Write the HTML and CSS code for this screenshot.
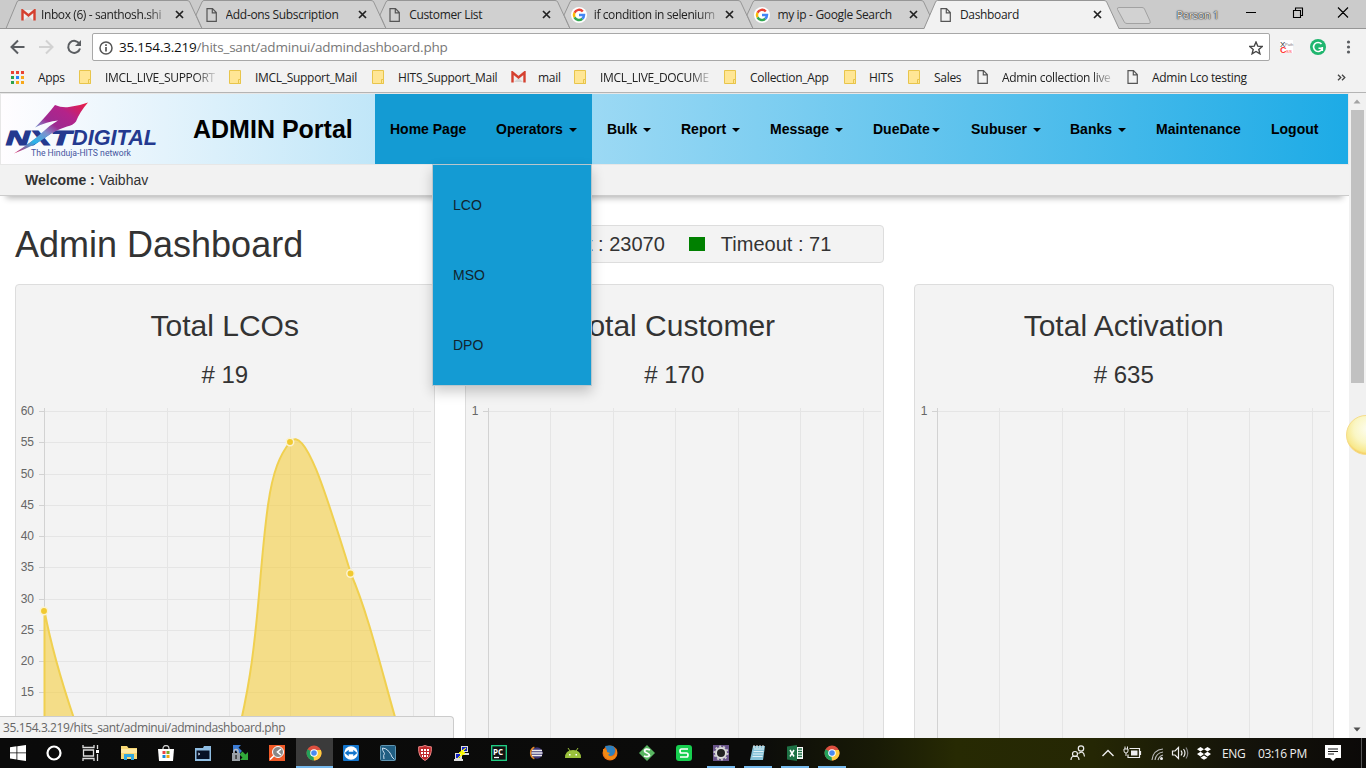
FILE: index.html
```html
<!DOCTYPE html>
<html lang="en">
<head>
<meta charset="utf-8">
<title>Dashboard</title>
<link rel="stylesheet" href="styles.css">
</head>
<body>
<svg class="defs" width="0" height="0" aria-hidden="true">
  <linearGradient id="star" x1="0" y1="1" x2="1" y2="0"><stop offset="0" stop-color="#e2195c"/><stop offset=".25" stop-color="#27b5ea"/><stop offset=".42" stop-color="#8190cc"/><stop offset=".55" stop-color="#9d2a91"/><stop offset=".75" stop-color="#b3238a"/><stop offset="1" stop-color="#ee1c3f"/></linearGradient>
  <radialGradient id="ball" cx=".55" cy=".35" r=".65"><stop offset="0" stop-color="#fdfdf0"/><stop offset=".55" stop-color="#faf6c4"/><stop offset=".9" stop-color="#f8e88c"/><stop offset="1" stop-color="#f6c95c"/></radialGradient>
  <symbol id="doc" viewBox="0 0 11 14"><path d="M1 .7h5.500l3.800 3.800v8.800H1zM6.300 1v3.800h4" fill="none" stroke="#555" stroke-width="1.200"/></symbol>
  <symbol id="folder" viewBox="0 0 12 14"><path d="M.5.5h11v13H.5z" fill="#ffe695" stroke="#e8c54b"/><path d="M9.500 9.500h2v4h-2z" fill="#ffe695" stroke="#e8c54b"/></symbol>
  <symbol id="gmail" viewBox="0 0 15 12"><path d="M1 1h13v10H1z" fill="#eee"/><path d="M3 11l4.500-4 4.500 4z" fill="#d5d5d5"/><path d="M1.500 11.500V1.500l6 5 6-5v10" fill="none" stroke="#d5402f" stroke-width="2.400"/></symbol>
  <symbol id="google" viewBox="0 0 16 16"><circle cx="8" cy="8" r="8" fill="#fff"/><g fill="none" stroke-width="2.500"><path d="M11.800 4.500A5 5 0 0 0 3.500 5.800" stroke="#ea4335"/><path d="M3.500 5.800a5 5 0 0 0 0 4.500" stroke="#fbbc05"/><path d="M3.500 10.300a5 5 0 0 0 7.800 1.400" stroke="#34a853"/><path d="M11.300 11.700A5 5 0 0 0 13 8H8" stroke="#4285f4"/></g></symbol>
  <symbol id="close" viewBox="0 0 9 9"><path d="M1 1l7 7M8 1L1 8" stroke="#222" stroke-width="1.700"/></symbol>
  <symbol id="chrome" viewBox="0 0 16 16"><circle cx="8" cy="8" r="7.500" fill="#dd4f3f"/><path d="M8 8l-6.500-3.700A7.500 7.500 0 0 0 8 15.500z" fill="#23a05a"/><path d="M8 8h-1l1 7.500a7.500 7.500 0 0 0 6.900-10.500H8z" fill="#fecd3f"/><circle cx="8" cy="8" r="3.800" fill="#fff"/><circle cx="8" cy="8" r="2.800" fill="#4a8af0"/></symbol>
</svg>

<header class="browser">
  <div class="tabstrip">
    <svg class="tabshapes" width="1366" height="29" viewBox="0 0 1366 29">
      <g fill="#d0d0d0" stroke="#969696">
        <path d="M6 28.500L17 2q.5-1.500 2-1.500H187q2 0 2.700 1.500L202 28.500z"/>
        <path d="M202 28.500L196 15 202 2q.7-1.500 2-1.500H371q2 0 2.700 1.500L386 28.500z"/>
        <path d="M386 28.500L380 15 386 2q.7-1.500 2-1.500H555q2 0 2.700 1.500L570 28.500z"/>
        <path d="M570 28.500L564 15 570 2q.7-1.500 2-1.500H738q2 0 2.700 1.500L753 28.500z"/>
        <path d="M753 28.500L747 15 753 2q.7-1.500 2-1.500H921q2 0 2.700 1.500L936 28.500z"/>
      </g>
      <path d="M0 28.500H1366" stroke="#969696"/>
      <path d="M924 29L935.500 2q.7-1.500 2-1.500H1104q2 0 2.700 1.500L1119 29z" fill="#f2f2f2"/>
      <path d="M924 28.500L935.500 2q.7-1.500 2-1.500H1104q2 0 2.700 1.500L1119 28.500" fill="none" stroke="#969696"/>
      <path d="M1119 7.500H1142q2 0 2.500 1.500L1150 21q1 2.500-1 2.500H1127q-2 0-2.700-1.500L1117.500 9.500q-.8-2 1.500-2z" fill="#d2d2d2" stroke="#a2a2a2"/>
    </svg>
    <div class="tab"><svg class="i15"><use href="#gmail"/></svg><span class="tlabel fade-g">Inbox (6) - santhosh.shi</span><svg class="x"><use href="#close"/></svg></div>
    <div class="tab"><svg class="idoc"><use href="#doc"/></svg><span class="tlabel">Add-ons Subscription</span><svg class="x"><use href="#close"/></svg></div>
    <div class="tab"><svg class="idoc"><use href="#doc"/></svg><span class="tlabel">Customer List</span><svg class="x"><use href="#close"/></svg></div>
    <div class="tab"><svg class="i16"><use href="#google"/></svg><span class="tlabel fade-g">if condition in selenium</span><svg class="x"><use href="#close"/></svg></div>
    <div class="tab"><svg class="i16"><use href="#google"/></svg><span class="tlabel">my ip - Google Search</span><svg class="x"><use href="#close"/></svg></div>
    <div class="tab"><svg class="idoc"><use href="#doc"/></svg><span class="tlabel">Dashboard</span><svg class="x"><use href="#close"/></svg></div>
    <span class="person">Person 1</span>
    <svg class="winctl" width="110" height="20" viewBox="0 0 110 20" fill="none" stroke="#000" stroke-width="1.100"><path d="M1 9.500h10M48.500 7.500h7v7h-7zM50.500 7.500v-2.500h7v7.500h-2M93 4.500l10 10M103 4.500l-10 10"/></svg>
  </div>
  <div class="toolbar">
    <svg class="navbtns" width="92" height="33" viewBox="0 0 92 33" fill="none" stroke="#5a5d61" stroke-width="2"><path d="M24.500 18H12.500M18 11.500L11.500 18l6.500 6.500"/><path d="M39 18h12.500M46 11.500l6.500 6.500-6.500 6.500" stroke="#d2d2d2"/><path d="M79.500 15A6 6 0 1 0 80 19.500"/><path d="M81 11v6h-6z" fill="#5a5d61" stroke="none"/></svg>
    <div class="omnibox">
      <svg width="14" height="14" viewBox="0 0 14 14"><circle cx="7" cy="7" r="6" fill="none" stroke="#555" stroke-width="1.500"/><path d="M7 6v4.500M7 3.300v1.600" stroke="#555" stroke-width="1.700"/></svg>
      <span class="url"><b>35.154.3.219</b>/hits_sant/adminui/admindashboard.php</span>
      <svg class="star" width="14" height="14" viewBox="0 0 14 14"><path d="M7 1l1.800 4.200 4.400.3-3.400 2.900 1.100 4.400L7 10.500l-3.900 2.300 1.100-4.400L.8 5.500l4.400-.3z" fill="none" stroke="#444" stroke-width="1.400"/></svg>
    </div>
    <svg class="exts" width="96" height="33" viewBox="0 0 96 33"><rect x="10" y="11" width="13" height="13" fill="#fff"/><g font-family="Liberation Sans"><text x="10" y="17.500" font-size="8" fill="#333">X</text><text x="15" y="17" font-size="4" fill="#777">Path</text><text x="10" y="24" font-size="9" font-weight="bold" fill="#f33">C</text><text x="16" y="24" font-size="6" fill="#f66">ss</text></g><circle cx="48" cy="18" r="8" fill="#20b66f"/><path d="M51.500 15A4.500 4.500 0 1 0 52.300 19.500M48.500 19.200h4M52.300 18v4" fill="none" stroke="#fff" stroke-width="1.600"/><g fill="#5a5d61"><circle cx="78.500" cy="13" r="1.600"/><circle cx="78.500" cy="18" r="1.600"/><circle cx="78.500" cy="23" r="1.600"/></g></svg>
  </div>
  <div class="bookmarks">
    <svg class="apps" width="13" height="13" viewBox="0 0 13 13"><path d="M0 0h3v3H0zM5 0h3v3H5zM10 0h3v3h-3z" fill="#ea4335"/><path d="M0 5h3v3H0zM0 10h3v3H0z" fill="#2ba24c"/><path d="M5 5h3v3H5z" fill="#2684fc"/><path d="M10 5h3v3h-3zM5 10h3v3H5zM10 10h3v3h-3z" fill="#f7a81b"/></svg>
    <span class="bm b-apps">Apps</span>
    <svg class="fd"><use href="#folder"/></svg><span class="bm b1 fade">IMCL_LIVE_SUPPORT</span>
    <svg class="fd"><use href="#folder"/></svg><span class="bm b2">IMCL_Support_Mail</span>
    <svg class="fd"><use href="#folder"/></svg><span class="bm b3">HITS_Support_Mail</span>
    <svg class="gm"><use href="#gmail"/></svg><span class="bm b4">mail</span>
    <svg class="fd"><use href="#folder"/></svg><span class="bm b5 fade">IMCL_LIVE_DOCUME</span>
    <svg class="fd"><use href="#folder"/></svg><span class="bm b6">Collection_App</span>
    <svg class="fd"><use href="#folder"/></svg><span class="bm b7">HITS</span>
    <svg class="fd"><use href="#folder"/></svg><span class="bm b8">Sales</span>
    <svg class="dc"><use href="#doc"/></svg><span class="bm b9 fade">Admin collection live</span>
    <svg class="dc"><use href="#doc"/></svg><span class="bm b10">Admin Lco testing</span>
    <svg class="more" width="9" height="7" viewBox="0 0 9 7" fill="none" stroke="#444" stroke-width="1.300"><path d="M1 .7l2.800 2.800L1 6.300M5 .7l2.800 2.800L5 6.300"/></svg>
  </div>
</header>

<div class="viewport">
  <main class="page">
    <nav class="navbar">
      <svg class="logo" width="165" height="70" viewBox="0 94 165 70">
        <g fill="#24398f" font-family="Liberation Sans" font-weight="bold" font-style="italic"><text x="6" y="144.500" font-size="20.500" textLength="65" lengthAdjust="spacingAndGlyphs" stroke="#24398f" stroke-width="1.200">NXT</text><text x="72" y="145" font-size="22" textLength="85" lengthAdjust="spacingAndGlyphs">DIGITAL</text></g>
        <path d="M55 105q7 3 14 2 10-1 19-4.500-8 9-12 19-3 4-9 5-12 4-20 10-12 9-33 17 17-11 27-20 8-8 17-13-11 1-23 7 12-12 20-22.500z" fill="url(#star)"/>
        <text x="31" y="155.500" font-family="Roboto" font-size="8.500" fill="#4656a0" textLength="100" lengthAdjust="spacingAndGlyphs">The Hinduja-HITS network</text>
      </svg>
      <div class="brand">ADMIN Portal</div>
      <a class="item on n1">Home Page</a>
      <a class="item on n2">Operators <i class="caret"></i></a>
      <a class="item n3">Bulk <i class="caret"></i></a>
      <a class="item n4">Report <i class="caret"></i></a>
      <a class="item n5">Message <i class="caret"></i></a>
      <a class="item n6">DueDate<i class="caret"></i></a>
      <a class="item n7">Subuser <i class="caret"></i></a>
      <a class="item n8">Banks <i class="caret"></i></a>
      <a class="item n9">Maintenance</a>
      <a class="item n10">Logout</a>
      <div class="dropdown"><a>LCO</a><a>MSO</a><a>DPO</a></div>
    </nav>
    <div class="welcome"><b>Welcome :</b> Vaibhav</div>
    <div class="titlerow">
      <h1>Admin Dashboard</h1>
      <div class="stats"><span>t : 23070</span><i class="green"></i><span>Timeout : 71</span></div>
    </div>
    <div class="cards">
      <section class="card">
        <h2>Total LCOs</h2><h3># 19</h3>
        <svg class="chart" width="418" height="400" viewBox="16 400 418 400">
          <path class="grid" d="M39 411.500H431M39 442.500H431M39 474.500H431M39 505.500H431M39 536.500H431M39 567.500H431M39 599.500H431M39 630.500H431M39 661.500H431M39 692.500H431M106.500 408V800M167.500 408V800M229.500 408V800M290.500 408V800M351.500 408V800M413.500 408V800"/>
          <path class="axis" d="M44.500 408V800M39 411.500H44M39 442.500H44M39 474.500H44M39 505.500H44M39 536.500H44M39 567.500H44M39 599.500H44M39 630.500H44M39 661.500H44M39 692.500H44"/>
          <path class="area" d="M44.500 611C51 645 61 680 73.500 717L98 790H44.500zM223 790C262 660 255 600 268 505C273 470 280 455 290 442C305 425 325 490 351 574C368 613 382 672 395 717L415 790z"/>
          <path class="line" d="M98 790L73.500 717C61 680 51 645 44.500 611V790M223 790C262 660 255 600 268 505C273 470 280 455 290 442C305 425 325 490 351 574C368 613 382 672 395 717L415 790"/>
          <g class="dots"><circle cx="44" cy="611" r="3.700"/><circle cx="290" cy="442" r="3.700"/><circle cx="350.500" cy="573.500" r="3.700"/></g>
          <g class="lab"><text x="34" y="415">60</text><text x="34" y="446">55</text><text x="34" y="478">50</text><text x="34" y="509">45</text><text x="34" y="540">40</text><text x="34" y="571">35</text><text x="34" y="603">30</text><text x="34" y="634">25</text><text x="34" y="665">20</text><text x="34" y="696">15</text></g>
        </svg>
      </section>
      <section class="card">
        <h2>Total Customer</h2><h3># 170</h3>
        <svg class="chart" width="418" height="400" viewBox="466 400 418 400">
          <path class="grid" d="M483 411.500H881M550.500 408V800M613.500 408V800M675.500 408V800M738.500 408V800M800.500 408V800M863.500 408V800"/><path class="axis" d="M488.500 408V800M483 411.500H488"/><g class="lab"><text x="478.500" y="415">1</text></g>
        </svg>
      </section>
      <section class="card">
        <h2>Total Activation</h2><h3># 635</h3>
        <svg class="chart" width="418" height="400" viewBox="915 400 418 400">
          <path class="grid" d="M932 411.500H1330M999.500 408V800M1062.500 408V800M1124.500 408V800M1187.500 408V800M1249.500 408V800M1312.500 408V800"/><path class="axis" d="M937.500 408V800M932 411.500H937"/><g class="lab"><text x="927.500" y="415">1</text></g>
        </svg>
      </section>
    </div>
  </main>
  <aside class="scroll">
    <svg width="17" height="17" viewBox="0 0 17 17"><path d="M4.500 10.500h7l-3.500-4z" fill="#a3a3a3"/></svg>
    <div class="thumb"></div>
    <svg class="down" width="17" height="17" viewBox="0 0 17 17"><path d="M4.500 6.500h7l-3.500 4z" fill="#505050"/></svg>
  </aside>
  <svg class="ball" width="20" height="42" viewBox="0 0 20 42"><circle cx="20" cy="21" r="19.500" fill="url(#ball)" stroke="#f5dc8a"/></svg>
  <div class="status">35.154.3.219/hits_sant/adminui/admindashboard.php</div>
</div>

<footer class="taskbar">
  <div class="t w36"><svg width="16" height="16" viewBox="0 0 16 16" fill="#fff"><path d="M0 2.200l6.500-.9v6.200H0zM7.300 1.200L16 0v7.500H7.300zM0 8.300h6.500v6.200L0 13.600zM7.300 8.300H16V16l-8.700-1.200z"/></svg></div>
  <div class="t w36"><svg width="16" height="16"><circle cx="8" cy="8" r="6.500" fill="none" stroke="#fff" stroke-width="2.200"/></svg></div>
  <div class="t w37"><svg width="18" height="16" viewBox="0 0 18 16" fill="none" stroke="#ddd" stroke-width="1.300"><path d="M1 0v2.500h11V0M1.500 5h10v6h-10zM1 16v-2.500h11V16M15.500 0v4M15.500 9v7"/><path d="M14 5h3v3h-3z" fill="#fff" stroke="none"/></svg></div>
  <div class="t"><svg width="16" height="16"><path d="M0 1h6l1.500 2H16v11H0z" fill="#f7d774"/><path d="M0 4h16v4H0z" fill="#ffe9a1"/><path d="M3 15V9h10v6h-3v-3H6v3z" fill="#31a8e0"/></svg></div>
  <div class="t"><svg width="16" height="16"><path d="M5 5V3.500a3 3 0 0 1 6 0V5" fill="none" stroke="#ccc" stroke-width="1.300"/><path d="M0 4h16l-1 12H1z" fill="#fff"/><path d="M4.500 6h3v3h-3z" fill="#e44"/><path d="M8.500 6h3v3h-3z" fill="#7ba82b"/><path d="M4.500 10h3v3h-3z" fill="#1889d8"/><path d="M8.500 10h3v3h-3z" fill="#f4a60d"/></svg></div>
  <div class="t"><svg width="16" height="15"><path d="M0 2h8l1-2h7v15H0z" fill="#8fbde2"/><path d="M1.500 4.500h13v8.500h-13z" fill="#071126"/><path d="M3 7l2 1-2 1" stroke="#bcd" fill="none"/></svg></div>
  <div class="t"><svg width="17" height="16"><path d="M1 0h8L6.500 2.500 10 6 7 9 3.500 5.500 1 8z" fill="#3b7bd4"/><path d="M16 15H8l2.500-2.500L7.500 9.500l3-3 3 3L16 7z" fill="#31a83b"/><path d="M0 8h8v8H0z" fill="#9aa0a6"/><path d="M2 8V6.500a2 2 0 0 1 4 0V8" fill="none" stroke="#bbb" stroke-width="1.500"/><path d="M3.300 10h1.500v4H3.300z" fill="#333"/></svg></div>
  <div class="t"><svg width="16" height="16"><path d="M0 0h16v16H0z" fill="#f05a28"/><circle cx="9" cy="7" r="5.500" fill="#888" stroke="#fff"/><path d="M12 4L8.500 7l3.500 3M1 14.500l4-4" fill="none" stroke="#fff" stroke-width="1.600"/></svg></div>
  <div class="t active"><svg width="16" height="16"><use href="#chrome"/></svg></div>
  <div class="t"><svg width="16" height="16"><rect width="16" height="16" rx="1" fill="#1376ce"/><circle cx="8" cy="8" r="6.800" fill="#fff"/><path d="M1.700 8l4-3.200v2h4.600v-2l4 3.200-4 3.200v-2H5.700v2z" fill="#1376ce"/></svg></div>
  <div class="t"><svg width="16" height="16"><rect x=".5" y=".5" width="15" height="15" rx="1" fill="#205e82" stroke="#5f95b2"/><path d="M4 14q-1-4 .5-5.500Q2 5 2.500 3 6 3 9 6.500q2.500 3.500 3 5.500l2.500 2.500" fill="none" stroke="#cde" stroke-width="1"/></svg></div>
  <div class="t"><svg width="14" height="16" viewBox="0 0 14 16"><path d="M7 .5q3 1.500 6.300 1.300 1 10-6.300 13.700Q-.3 11.800.7 1.800 4 2 7 .5z" fill="#bf2a2c" stroke="#e88"/><path d="M3 4h8v2H3zM3 7h8v2H3zM4 10h6v2H4z" fill="#fff"/><path d="M5.500 3v10M8.500 3v10" stroke="#bf2a2c"/></svg></div>
  <div class="t"><svg width="16" height="16"><path d="M7 1h7v6H7zM1 8h7v6H1zM9 8h6v2H9zM0 14h9v2H0z" fill="#ddd"/><path d="M8 2h5v4H8zM2 9h4v4H2z" fill="#1525c5"/><path d="M12 3L5 8l3 1-4 4 7-5-3-1z" fill="#ff0" stroke="#ff0"/></svg></div>
  <div class="t"><svg width="16" height="16"><rect x=".7" y=".7" width="14.600" height="14.600" fill="#111" stroke="#21d789" stroke-width="1.300"/><text x="2" y="9.500" font-family="Open Sans" font-size="8" font-weight="bold" fill="#fff">PC</text><path d="M3 12.500h5" stroke="#fff" stroke-width="1.300"/></svg></div>
  <div class="t"><svg width="16" height="14"><path d="M6.500 1.500a6 6 0 0 0 0 11" fill="none" stroke="#e98b26" stroke-width="2"/><circle cx="9" cy="7" r="5.700" fill="#3d3574"/><path d="M4 4.500h10M3.500 7h11M4 9.500h10" stroke="#eee" stroke-width="1.300"/></svg></div>
  <div class="t"><svg width="16" height="10"><path d="M0 10q0-8 8-8t8 8z" fill="#9ac03c"/><path d="M3 0l2 3M13 0l-2 3" stroke="#9ac03c"/><path d="M4 6h1.500v1.500H4zM10.500 6H12v1.500h-1.500z" fill="#fff"/></svg></div>
  <div class="t"><svg width="16" height="16"><circle cx="8" cy="8" r="7.500" fill="#e96a12"/><path d="M3 1q4-1 8 0 3 3 2 6-1 4-5 4-4-1-3-4 0-2-2-6z" fill="#2f80bd"/><path d="M1 4q4 0 4 3l3 1-2 2q3 3 7 0l2-7q1 9-5 12Q0 14 1 4z" fill="#f28a15"/></svg></div>
  <div class="t"><svg width="16" height="16"><path d="M8 0l8 8-8 8-8-8z" fill="#58b661"/><path d="M11 5Q6 3 5.500 6q0 1 2.500 2t2.500 2.500Q9 12.500 5 11" fill="none" stroke="#fff" stroke-width="1.800"/></svg></div>
  <div class="t"><svg width="16" height="16"><rect width="16" height="16" rx="3" fill="#17cf50"/><path d="M12 4H5.500q-1.500 0-1.500 2t1.500 2h5Q12 8 12 10t-1.500 2H4" fill="none" stroke="#fff" stroke-width="1.700"/></svg></div>
  <div class="t run"><svg width="16" height="16"><path d="M0 0h16v16H0z" fill="#68538a"/><circle cx="8" cy="8" r="5" fill="#222" stroke="#ddd" stroke-width="2"/><circle cx="8" cy="8" r="6.500" fill="none" stroke="#ccc" stroke-width="2" stroke-dasharray="2 2"/></svg></div>
  <div class="t run"><svg width="16" height="16"><path d="M3 1h12l-2 14H0z" fill="#86c2d8"/><path d="M4 4h10M3.500 6.500h10M3 9h10M2.500 11.500h10" stroke="#dff1f7"/><path d="M4 0v3M7 0v3M10 0v3M13 0v3" stroke="#eee"/></svg></div>
  <div class="t run"><svg width="16" height="16"><path d="M9 2h7v12H9z" fill="#fff"/><path d="M11 4h4M11 6.500h4M11 9h4M11 11.500h4" stroke="#1e7145" stroke-width="1.500"/><path d="M0 1.500L10 0v16L0 14.500z" fill="#1e7145"/><path d="M3 5l4 6.500M7 5l-4 6.500" stroke="#fff" stroke-width="1.500"/></svg></div>
  <div class="t run"><svg width="16" height="16"><use href="#chrome"/></svg></div>
  <div class="tray">
    <svg width="146" height="30" viewBox="1066 738 146 30" fill="none" stroke="#eee" stroke-width="1.200"><circle cx="1081" cy="748.500" r="2.700"/><circle cx="1075" cy="754" r="2.500"/><path d="M1071 760q0-4 4-4t4 4M1078.500 753.500q5-4 6 3"/><path d="M1102.500 756l5.500-5.500 5.500 5.500" stroke-width="1.400"/><path d="M1131 750.500h6.500v5h-6.500z" fill="#eee" stroke="none"/><path d="M1129.500 748.500h10v9h-11.500v-3M1140.500 751v4"/><path d="M1124 749h4v2q0 2-2 2t-2-2zM1125 746.500v2.500M1127.500 746.500v2.500M1126 753v3" stroke-width="1"/><path d="M1152 760q1-10 11-11M1155 760q1-7 8-8M1158 760q1-4 5-5" stroke="#bbb"/><circle cx="1161.500" cy="758.500" r="1.500" fill="#eee" stroke="none"/><path d="M1172.500 751h2.500l3.500-3.500v11l-3.500-3.500h-2.500z"/><path d="M1181 750.500q2 2.500 0 5M1183.500 749q3 4 0 8"/><path d="M1186 747.500q3.500 5.500 0 11" stroke="#888"/><g fill="#fff" stroke="none"><path d="M1200.500 747l3.500 2.300-3.500 2.300-3.500-2.300zM1207.500 747l3.500 2.300-3.500 2.300-3.500-2.300zM1200.500 751.800l3.500 2.300-3.500 2.300-3.500-2.300zM1207.500 751.800l3.500 2.300-3.500 2.300-3.500-2.300zM1204 755.500l3.500 2.200-3.500 2-3.500-2z"/></g></svg>
    <span class="eng">ENG</span><span class="clock">03:16 PM</span>
    <svg class="note" width="16" height="16"><path d="M0 0h16v13h-5l-3 3-3-3H0z" fill="#fff"/><path d="M3 4h10M3 6.500h10M3 9h6" stroke="#111" stroke-width="1.200"/></svg>
    <i class="peek"></i>
  </div>
</footer>
</body>
</html>
```

FILE: styles.css
```css
* { box-sizing: border-box; }
body { margin: 0; width: 1366px; height: 768px; overflow: hidden; display: flex; flex-direction: column; font-family: "Liberation Sans", Arial, sans-serif; font-size: 14px; color: #333; background: #fff; }
svg { display: block; flex: none; }
.defs { position: absolute; }

/* browser chrome */
.browser { height: 93px; flex: none; font-family: "Open Sans", "Noto Sans", sans-serif; font-size: 12px; color: #222; background: #f2f2f2; border-bottom: 1px solid #b4b4b4; }
.tabstrip { position: relative; height: 29px; display: flex; align-items: center; background: #cbcbcb; padding-left: 21px; }
.tabshapes { position: absolute; left: 0; top: 0; }
.tab { position: relative; width: 183.600px; height: 29px; display: flex; align-items: center; padding-right: 22px; }
.tlabel { flex: 1; white-space: nowrap; overflow: hidden; letter-spacing: -.33px; margin-left: 5px; line-height: 20px; }
.tab .i15 { width: 15px; height: 12px; }
.tab .i16 { width: 16px; height: 16px; margin-left: -1px; margin-right: 2px; }
.idoc { width: 11px; height: 14px; margin: 0 4px 0 1px; }
.tab .x { width: 9px; height: 9px; margin-left: 5px; margin-right: -1px; }
.tab .fade-g { letter-spacing: -.4px; }
.fade, .fade-g { -webkit-mask-image: linear-gradient(90deg, #000 82%, rgba(0,0,0,.15)); mask-image: linear-gradient(90deg, #000 82%, rgba(0,0,0,.15)); }
.person { position: relative; margin-left: 54px; font-size: 11px; letter-spacing: -.35px; color: #e8e8e8; text-shadow: 0 0 1px #222, 0 0 1px #222, 0 0 2px #555; width: 68px; }
.winctl { position: relative; margin-top: -3px; }
.toolbar { height: 33px; display: flex; }
.omnibox { width: 1178px; height: 28px; margin-top: 4px; border: 1px solid #a8a8a8; border-radius: 2px; background: #fff; display: flex; align-items: center; padding: 0 6px; }
.omnibox svg { margin-top: 1px; }
.url { flex: 1; margin-left: 6px; font-size: 13.500px; letter-spacing: -.21px; color: #777; }
.url b { font-weight: 400; color: #111; }
.bookmarks { height: 30px; display: flex; align-items: center; padding-left: 11px; letter-spacing: -.3px; }
.bm { white-space: nowrap; overflow: hidden; margin-left: 14px; }
.fd { width: 12px; height: 14px; }
.dc { width: 11px; height: 14px; }
.gm { width: 15px; height: 12px; }
.b-apps { width: 41px; } .b1 { width: 110px; margin-right: 14px; } .b2 { width: 117px; } .b3 { width: 113px; } .b4 { width: 36px; margin-left: 12px; }
.b5 { width: 110px; margin-right: 14px; } .b6 { width: 94px; } .b7 { width: 39px; margin-left: 13px; } .b8 { width: 43px; } .b9 { width: 110px; margin-right: 15px; } .b10 { width: 185px; }

/* viewport */
.viewport { position: relative; flex: 1; display: flex; overflow: hidden; }
.page { width: 1349px; overflow: hidden; }
.navbar { position: relative; z-index: 2; height: 72px; border: 1px solid #e7e7e7; display: flex; background: linear-gradient(90deg, #fffdff, #1dabe6); }
.logo { margin-left: -1px; }
.brand { width: 210px; padding-left: 28px; line-height: 70px; font-size: 25px; font-weight: bold; color: #000; white-space: nowrap; }
.item { padding-left: 15px; line-height: 70px; font-weight: bold; color: #000; white-space: nowrap; }
.item.on { background: #149bd3; }
.caret { display: inline-block; vertical-align: middle; margin-left: 2px; border: 4px solid transparent; border-top-color: #000; border-bottom: 0; }
.n1 { width: 106px; } .n2 { width: 111px; } .n3 { width: 74px; } .n4 { width: 89px; } .n5 { width: 103px; } .n6 { width: 98px; } .n7 { width: 99px; } .n8 { width: 86px; } .n9 { width: 115px; }
.dropdown { position: absolute; left: 431px; top: 70px; width: 160px; height: 222px; background: #149bd3; border: 1px solid #b9c6cc; box-shadow: 0 6px 12px rgba(0,0,0,.2); padding-top: 5px; }
.dropdown a { display: block; height: 70px; line-height: 70px; padding-left: 20px; color: #12242e; font-size: 14px; }
.welcome { height: 31px; line-height: 30px; background: #f2f2f2; border-bottom: 1px solid #ccc; padding-left: 25px; box-shadow: 0 8px 6px -6px rgba(0,0,0,.3); }
.titlerow { display: flex; height: 88px; padding-left: 15px; }
h1 { margin: 28px 0 0; width: 450px; font-size: 36px; font-weight: 400; line-height: 42px; }
.stats { margin-top: 29px; width: 419px; height: 38px; background: #f3f3f3; border: 1px solid #ddd; border-radius: 4px; display: flex; align-items: center; font-size: 20px; padding-left: 121px; }
.green { width: 16px; height: 14px; background: #008000; margin: 0 16px 0 24px; }
.cards { display: flex; gap: 30px; padding-left: 15px; }
.card { width: 419.500px; height: 520px; flex: none; background: #f3f3f3; border: 1px solid #ddd; border-radius: 4px; text-align: center; }
h2 { margin: 24px 0 0; font-size: 30px; line-height: 33px; font-weight: 400; }
h3 { margin: 20px 0 0; font-size: 24px; line-height: 26px; font-weight: 400; }
.chart { margin-top: 12px; }
.grid { stroke: #e5e5e5; fill: none; }
.axis { stroke: #d2d2d2; fill: none; }
.area { fill: rgba(243,207,70,.62); }
.line { fill: none; stroke: #f0d050; stroke-width: 2; }
.dots circle { fill: #f1c930; stroke: #fbf2cf; stroke-width: 1.500; }
.lab { font-size: 12px; fill: #666; text-anchor: end; }
.scroll { width: 17px; background: #f1f1f1; display: flex; flex-direction: column; }
.thumb { width: 13px; height: 273px; margin-left: 2px; background: #c1c1c1; }
.down { margin-top: auto; }
.ball { position: absolute; right: 0; top: 321px; }
.status { position: absolute; left: -1px; bottom: 0; width: 455px; height: 22px; background: #f2f2f2; border: 1px solid #ccc; border-bottom: 0; border-radius: 0 4px 0 0; padding-left: 3px; line-height: 22px; font-family: "Open Sans", sans-serif; font-size: 12px; letter-spacing: -.39px; color: #666; }

/* taskbar */
.taskbar { height: 30px; flex: none; display: flex; background: linear-gradient(90deg, #0a0a0a 0, #0b0b0a 55%, #181a06 64%, #272a03 70%, #252704 80%, #14130a 91%, #0b0908 100%); color: #eee; }
.t { width: 37px; height: 30px; display: flex; align-items: center; justify-content: center; }
.w36 { width: 36px; } .w37 { width: 38.500px; }
.active { background: #3b3b3b; box-shadow: inset 0 -2px #76b9ed; }
.run { background: linear-gradient(#76b9ed, #76b9ed) center bottom / 28px 2px no-repeat; }
.tray { margin-left: auto; width: 300px; display: flex; align-items: center; font-family: "Open Sans", sans-serif; font-size: 12px; letter-spacing: -.35px; }
.eng { width: 36px; margin-left: 10px; }
.clock { width: 67px; }
.peek { width: 1px; height: 30px; background: #555; margin-left: 20px; }
```
